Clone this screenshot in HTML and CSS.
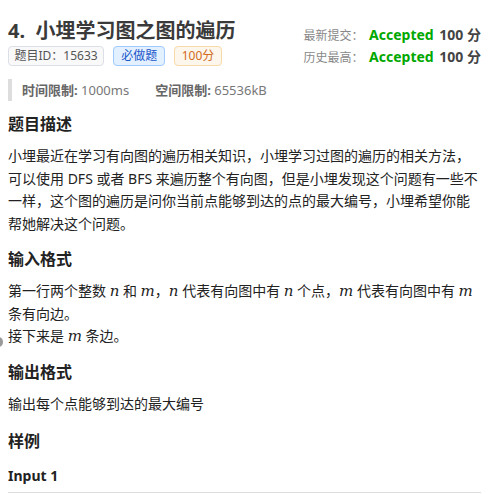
FILE: index.html
```html
<!DOCTYPE html>
<html lang="zh-CN">
<head>
    <meta charset="UTF-8">
    <meta name="viewport" content="width=device-width, initial-scale=1.0">
    <title>小埋学习图之图的遍历</title>
    <link rel="stylesheet" href="styles.css">
</head>
<body>
    <div class="problem">
        <div class="header">
            <div class="header-left">
                <h1 class="title">4.&nbsp; 小埋学习图之图的遍历</h1>
                <div class="tags">
                    <span class="tag tag-info">题目ID：15633</span>
                    <span class="tag tag-blue">必做题</span>
                    <span class="tag tag-orange">100分</span>
                </div>
            </div>
            <div class="status">
                <div class="status-row">
                    <span class="status-label">最新提交：</span>
                    <span class="accepted">Accepted</span>
                    <span class="score">100 分</span>
                </div>
                <div class="status-row">
                    <span class="status-label">历史最高：</span>
                    <span class="accepted">Accepted</span>
                    <span class="score">100 分</span>
                </div>
            </div>
        </div>

        <div class="limits">
            <span><b>时间限制:</b> 1000ms</span>
            <span><b>空间限制:</b> 65536kB</span>
        </div>

        <h2>题目描述</h2>
        <p>小埋最近在学习有向图的遍历相关知识，小埋学习过图的遍历的相关方法，可以使用 DFS 或者 BFS 来遍历整个有向图，但是小埋发现这个问题有一些不一样，这个图的遍历是问你当前点能够到达的点的最大编号，小埋希望你能帮她解决这个问题。</p>

        <h2>输入格式</h2>
        <p>第一行两个整数 <i class="math">n</i> 和 <i class="math">m</i>，<i class="math">n</i> 代表有向图中有 <i class="math">n</i> 个点，<i class="math">m</i> 代表有向图中有 <i class="math">m</i> 条有向边。<br>接下来是 <i class="math">m</i> 条边。</p>

        <h2>输出格式</h2>
        <p>输出每个点能够到达的最大编号</p>

        <h2 class="sample">样例</h2>
        <h3>Input 1</h3>
        <hr>
    </div>
    <span class="edge-handle"></span>
</body>
</html>
```

FILE: styles.css
```css
body {
    margin: 0;
    padding: 0 10px 0 8px;
    font-family: "Noto Sans", "Noto Sans CJK SC", sans-serif;
    color: #222;
    background-color: white;
    overflow: hidden;
}

.header {
    display: flex;
    justify-content: space-between;
    align-items: flex-start;
    height: 66px;
}

.title {
    margin: 17px 0 0 0;
    font-size: 20px;
    line-height: 28px;
    height: 28px;
    color: #3a3a3a;
}

.tags {
    display: flex;
    gap: 9px;
    margin-top: 1px;
}

.tag {
    font-size: 12px;
    line-height: 18px;
    height: 18px;
    padding: 0 7px;
    border: 1px solid;
    border-radius: 4px;
}

.tag-info {
    background-color: #f9f9fa;
    border-color: #dcdfe6;
    color: #555;
    padding: 0 5.5px;
}

.tag-blue {
    background-color: #e3f0ff;
    border-color: #9fcbff;
    color: #1a56c9;
}

.tag-orange {
    background-color: #fdf6ec;
    border-color: #f8d9a8;
    color: #d26a1c;
    padding: 0 6.5px;
}

.status {
    display: flex;
    flex-direction: column;
    gap: 2px;
    margin-top: 25px;
}

.status-row {
    font-size: 14px;
    line-height: 20px;
    height: 20px;
    text-align: right;
}

.status-label {
    color: #888;
    font-size: 12px;
}

.accepted {
    color: #00a800;
    font-weight: bold;
    margin-left: 2px;
}

.score {
    color: #444;
    font-weight: bold;
    margin-left: 2px;
}

.limits {
    margin-top: 13px;
    border-left: 4px solid #ddd;
    padding-left: 10px;
    font-size: 13px;
    line-height: 22px;
    height: 22px;
    color: #777;
    display: flex;
    gap: 26px;
}

.limits b {
    color: #666;
}

h2 {
    font-size: 16px;
    line-height: 24px;
    height: 24px;
    margin: 12px 0 9px 0;
    color: #222;
}

.limits + h2 {
    margin-top: 11px;
}

h2.sample {
    margin-top: 14px;
}

p {
    font-size: 14px;
    line-height: 22.5px;
    margin: 0 0 1px 0;
}

.math {
    font-family: "DejaVu Serif", "Liberation Serif", serif;
    font-size: 15px;
    line-height: 1;
}

h3 {
    font-size: 14px;
    margin: 13px 0 0 0;
    line-height: 20px;
    height: 20px;
}

hr {
    border: none;
    border-top: 1px solid #ddd;
    margin: 6px 0 0 0;
}

.edge-handle {
    position: absolute;
    left: -5px;
    top: 337px;
    width: 8px;
    height: 10px;
    border-radius: 50%;
    background-color: #999;
}
```
